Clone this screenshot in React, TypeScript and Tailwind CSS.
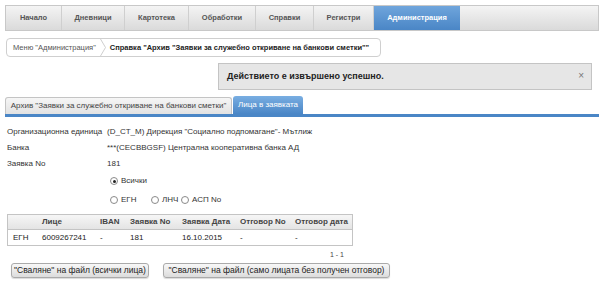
const navItems = ["Начало", "Дневници", "Картотека", "Обработки", "Справки", "Регистри"];
const navWidths = [56, 63, 64, 67, 58, 60];

const cols = [
  { label: "", w: "w-[31px] pl-[5px]" },
  { label: "Лице", w: "w-[58px] pl-[3px]" },
  { label: "IBAN", w: "w-[30px] pl-[3px]" },
  { label: "Заявка No", w: "w-[52px] pl-[3px]" },
  { label: "Заявка Дата", w: "w-[58px] pl-[3px]" },
  { label: "Отговор No", w: "w-[55px] pl-[3px]" },
  { label: "Отговор дата", w: "w-[60px] pl-[3px]" },
];
const row = ["ЕГН", "6009267241", "-", "181", "16.10.2015", "-", "-"];

function Radio({ checked }: { checked?: boolean }) {
  return (
    <span className="relative inline-block h-[8px] w-[8px] shrink-0 rounded-full border border-[#8a8a8a] bg-white">
      {checked && <span className="absolute left-[1.5px] top-[1.5px] h-[3px] w-[3px] rounded-full bg-[#222]" />}
    </span>
  );
}

export default function App() {
  return (
    <div className="h-[301px] w-[604px] overflow-hidden whitespace-nowrap bg-white pt-[5px] text-[8px] text-[#333] [font-family:'Liberation_Sans',Arial,sans-serif]">
      {/* main menu */}
      <nav className="mx-[5px] flex h-[26px] border border-[#c8c8c8] bg-gradient-to-b from-[#f4f4f4] to-[#dadada]">
        {navItems.map((item, i) => (
          <div
            key={item}
            style={{ width: navWidths[i] }}
            className="flex items-center justify-center border-r border-[#cfcfcf] text-[7.5px] font-bold text-[#555]"
          >
            {item}
          </div>
        ))}
        <div className="flex w-[86px] items-center justify-center bg-gradient-to-b from-[#6fa5dc] to-[#4a86c6] text-[7.5px] font-bold text-white">
          Администрация
        </div>
      </nav>

      {/* breadcrumb */}
      <div className="ml-[6px] mt-[7px] flex h-[19px] w-[375px] items-center rounded-[4px] border border-[#cfcfcf] bg-white">
        <span className="pl-[6px] pr-[4px] text-[7.5px] text-[#555]">Меню "Администрация"</span>
        <svg width="6" height="17" viewBox="0 0 6 17" className="shrink-0">
          <path d="M0.5 0 L5.5 8.5 L0.5 17" fill="none" stroke="#cfcfcf" />
        </svg>
        <span className="pl-[4px] text-[7.5px] font-bold text-[#222]">
          Справка "Архив "Заявки за служебно откриване на банкови сметки""
        </span>
      </div>

      {/* message */}
      <div className="ml-[218px] mt-[6px] flex h-[27px] w-[374px] items-center justify-between border border-[#c4c4c4] bg-[#e6e6e6] pl-[8px] pr-[7px]">
        <span className="text-[9px] font-bold text-[#222]">Действието е извършено успешно.</span>
        <span className="mb-[3px] text-[10px] text-[#777]">×</span>
      </div>

      {/* sub tabs */}
      <div className="mx-[5px] mt-[7px] flex h-[20px] items-end gap-[1px] border-b-[3px] border-[#4a86c6]">
        <div className="flex h-[17px] w-[227px] items-center justify-center rounded-t-[3px] border border-b-0 border-[#c4c4c4] bg-gradient-to-b from-[#f6f6f6] to-[#e2e2e2] text-[8px] text-[#444]">
          Архив "Заявки за служебно откриване на банкови сметки"
        </div>
        <div className="flex h-[18px] w-[70px] items-center justify-center rounded-t-[3px] bg-gradient-to-b from-[#79aee2] to-[#4a86c6] text-[8px] text-white">
          Лица в заявката
        </div>
      </div>

      {/* details */}
      <div className="ml-[7px] mt-[9px] flex flex-col gap-[4px] text-[#333]">
        <div className="flex h-[12px] items-center">
          <span className="w-[100px]">Организационна единица</span>
          <span>(D_CT_M) Дирекция "Социално подпомагане"- Мътлиж</span>
        </div>
        <div className="flex h-[12px] items-center">
          <span className="w-[100px]">Банка</span>
          <span>***(CECBBGSF) Централна кооперативна банка АД</span>
        </div>
        <div className="flex h-[12px] items-center">
          <span className="w-[100px]">Заявка No</span>
          <span>181</span>
        </div>
      </div>

      <div className="ml-[110px] mt-[5px] flex flex-col gap-[7px]">
        <div className="flex h-[12px] items-center gap-[3px]">
          <Radio checked />
          <span>Всички</span>
        </div>
        <div className="flex h-[12px] items-center">
          <Radio />
          <span className="ml-[3px] w-[30px]">ЕГН</span>
          <Radio />
          <span className="ml-[3px] w-[19px]">ЛНЧ</span>
          <Radio />
          <span className="ml-[3px]">АСП No</span>
        </div>
      </div>

      {/* table */}
      <div className="ml-[7px] mt-[8px] w-[346px] border border-[#c4c4c4]">
        <div className="flex h-[15px] items-center border-b border-[#c4c4c4] bg-gradient-to-b from-[#f6f6f6] to-[#e4e4e4] font-bold text-[#444]">
          {cols.map((c) => (
            <span key={c.label} className={c.w}>
              {c.label}
            </span>
          ))}
        </div>
        <div className="flex h-[15px] items-center text-[#222]">
          {row.map((v, i) => (
            <span key={i} className={cols[i].w}>
              {v}
            </span>
          ))}
        </div>
      </div>

      <div className="ml-[7px] mt-[4px] w-[346px] pr-[9px] text-right text-[7px] text-[#444]">1 - 1</div>

      <div className="ml-[11px] mt-[2px] flex gap-[14px]">
        <button className="h-[15px] w-[138px] rounded-[3px] border border-[#aaa] bg-gradient-to-b from-[#f8f8f8] to-[#dcdcdc] text-[8.5px] text-[#222] shadow-[0_1px_1px_rgba(0,0,0,0.15)]">
          "Сваляне" на файл (всички лица)
        </button>
        <button className="h-[15px] w-[227px] rounded-[3px] border border-[#aaa] bg-gradient-to-b from-[#f8f8f8] to-[#dcdcdc] text-[8.5px] text-[#222] shadow-[0_1px_1px_rgba(0,0,0,0.15)]">
          "Сваляне" на файл (само лицата без получен отговор)
        </button>
      </div>
    </div>
  );
}
